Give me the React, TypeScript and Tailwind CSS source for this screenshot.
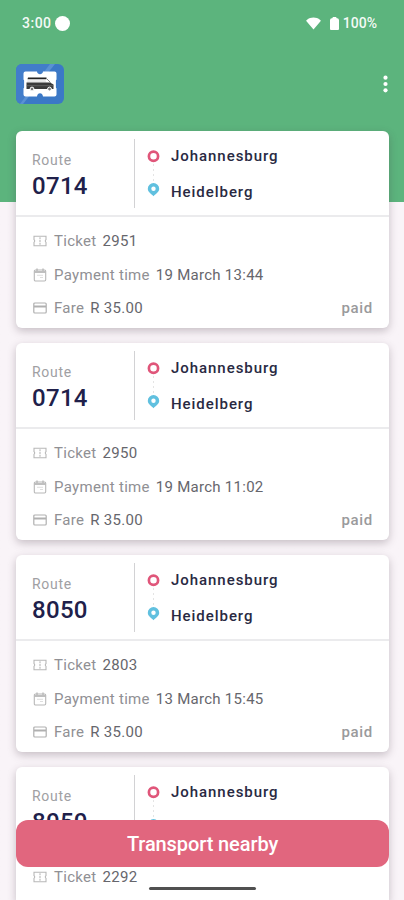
import type { ReactNode } from "react";

type Ticket = {
  route: string;
  from: string;
  to: string;
  number: string;
  time: string;
  fare: string;
};

const tickets: Ticket[] = [
  { route: "0714", from: "Johannesburg", to: "Heidelberg", number: "2951", time: "19 March 13:44", fare: "R 35.00" },
  { route: "0714", from: "Johannesburg", to: "Heidelberg", number: "2950", time: "19 March 11:02", fare: "R 35.00" },
  { route: "8050", from: "Johannesburg", to: "Heidelberg", number: "2803", time: "13 March 15:45", fare: "R 35.00" },
];

// the last card runs under the button and off the screen
const lastTicket = { route: "8050", from: "Johannesburg", number: "2292" };

const StatusBar = () => {
  return (
    <div className="flex h-[45px] items-center justify-between pt-px pl-[22px] pr-[27px] text-[14px] font-medium text-white/95">
      <div className="flex items-center gap-[3px]">
        <span className="tracking-[0.5px]">3:00</span>
        <span className="size-[15px] rounded-full bg-white" />
      </div>
      <div className="flex items-center">
        <svg width="15" height="13" viewBox="0 0 15 13" fill="white">
          <path d="M7.500 12.500.5 4.200Q-.1 3.500.8 2.900C4.800-.300 10.200-.300 14.200 2.900q.9.600.3 1.300Z" />
        </svg>
        <svg className="ml-[9px]" width="9" height="13" viewBox="0 0 9 13" fill="white">
          <path d="M3 0h3l.8 1.200A2 2 0 0 1 9 3.200V12a1 1 0 0 1-1 1H1a1 1 0 0 1-1-1V3.200a2 2 0 0 1 2.200-2z" />
        </svg>
        <span className="ml-[4px]">100%</span>
      </div>
    </div>
  );
};

const Logo = () => {
  return (
    <svg width="48" height="40" viewBox="0 0 48 40">
      <rect width="48" height="40" rx="6" fill="#3b78c6" />
      <path d="M6 0h33L7 40H6a6 6 0 0 1-6-6V6a6 6 0 0 1 6-6z" fill="#427dca" />
      <path d="M34 0h5L7 40H4z" fill="#6a9edb" opacity=".6" />
      <path
        d="M9.500 7.500H21c.3 3.500 5.700 3.500 6 0h11.500a2 2 0 0 1 2 2v6l-.6 1v7l.6 1v6a2 2 0 0 1-2 2H27c-.3-4.500-5.700-4.500-6 0H9.500a2 2 0 0 1-2-2v-6l.6-1v-7l-.6-1v-6a2 2 0 0 1 2-2z"
        fill="white"
      />
      <path d="M12 13.500h18.500v1.800H11.500z" fill="#222" />
      <path d="M11.500 16.200h18l1 2.300h-19.500z" fill="#e6e6e6" />
      <path d="M30.500 14.500 34.500 18.500" stroke="#888" />
      <path d="M10.500 18.500H34l3.500 2v4.500h-27z" fill="#3a3a3a" />
      <path d="M10.500 21.700h27" stroke="#777" strokeWidth=".6" />
      <circle cx="16" cy="25" r="1.900" fill="#777" stroke="white" />
      <circle cx="33.500" cy="25" r="1.900" fill="#777" stroke="white" />
    </svg>
  );
};

const TicketIcon = () => (
  <svg width="14" height="12" viewBox="0 0 14 12" fill="none" stroke="#b8b8b8" strokeWidth="1.100">
    <path d="M1 1.300h12v3.400q-1.400 1.300 0 2.600v3.400H1V7.300q1.400-1.300 0-2.600z" />
    <path d="M7 2.200v7.600" strokeDasharray="2 .8" />
  </svg>
);

const CalendarIcon = () => (
  <svg width="14" height="14" viewBox="0 0 14 14" fill="none" stroke="#b8b8b8" strokeWidth="1.100">
    <rect x="1.300" y="2" width="11.400" height="11" rx="1.200" />
    <path d="M1.500 4h11" strokeWidth="1.800" />
    <path d="M4 .5V3M10 .5V3" strokeWidth="1.400" />
    <path d="M4 7.300h6M7 9.500h3" strokeWidth=".8" stroke="#d6d6d6" />
  </svg>
);

const CardIcon = () => (
  <svg width="14" height="12" viewBox="0 0 14 12" fill="none" stroke="#b0b0b0" strokeWidth="1.200">
    <rect x=".8" y="1" width="12.400" height="10" rx="1" />
    <path d="M1 4.500h12" strokeWidth="2" />
  </svg>
);

const Row = ({ icon, label, value, children }: { icon: ReactNode; label: string; value: string; children?: ReactNode }) => {
  return (
    <div className="flex h-[33.400px] items-center text-[15px] leading-5">
      <span className="flex w-[15px] justify-end">{icon}</span>
      <span className="ml-[7px] tracking-[0.3px] text-[#909094]">{label}</span>
      <span className="ml-[6px] tracking-[0.27px] text-[#66666c]">{value}</span>
      {children}
    </div>
  );
};

const RouteNumber = ({ route }: { route: string }) => {
  return (
    <div className="mt-2 mb-[7px] w-[119px] border-r border-[#d2d2d4] pl-4">
      <div className="mt-[11px] text-[14px] leading-5 tracking-[0.7px] text-[#a0a0a3]">Route</div>
      <div className="mt-[1.500px] text-[24px] leading-[28px] font-medium tracking-[0.300px] text-[#20204a]">{route}</div>
    </div>
  );
};

const Stops = ({ from, to }: { from: string; to?: string }) => {
  return (
    <>
      <div className="flex w-9 flex-col items-center pt-[19px]">
        <svg width="14" height="48" viewBox="0 0 14 48" fill="none">
          <circle cx="7.500" cy="6.200" r="4.600" stroke="#e0567a" strokeWidth="2.700" />
          <path d="M7.500 14v18" stroke="#e4e4e4" strokeDasharray="2 3" />
          <path
            d="M7.500 33a5.700 5.700 0 0 0-5.700 5.700c0 3.200 3.500 5.100 5.700 7.500 2.200-2.400 5.700-4.300 5.700-7.500A5.700 5.700 0 0 0 7.500 33z"
            fill="#60c0df"
          />
          <circle cx="7.500" cy="38.700" r="2.200" fill="white" />
        </svg>
      </div>
      <div className="pt-[15px] text-[15px] leading-5 font-medium tracking-[0.950px] text-[#292942]">
        <div>{from}</div>
        {to && <div className="mt-[15.500px]">{to}</div>}
      </div>
    </>
  );
};

const TicketCard = ({ ticket }: { ticket: Ticket }) => {
  return (
    <div className="h-[196.500px] shrink-0 rounded-md bg-white shadow-[0_3px_9px_rgba(70,50,65,0.28)]">
      <div className="flex h-[86px] border-b-2 border-[#ebebed]">
        <RouteNumber route={ticket.route} />
        <Stops from={ticket.from} to={ticket.to} />
      </div>
      <div className="px-4 pt-[7.500px]">
        <Row icon={<TicketIcon />} label="Ticket" value={ticket.number} />
        <Row icon={<CalendarIcon />} label="Payment time" value={ticket.time} />
        <Row icon={<CardIcon />} label="Fare" value={ticket.fare}>
          <span className="ml-auto font-medium tracking-[0.700px] text-[#9a9a9c]">paid</span>
        </Row>
      </div>
    </div>
  );
};

const App = () => {
  return (
    <div className="relative h-[900px] w-[404px] overflow-hidden bg-[#f9f4f8] bg-linear-to-b from-[#5cb47d] from-[202px] to-[#f9f4f8] to-[202px] font-[Roboto,sans-serif]">
      <StatusBar />
      <header className="flex h-[86px] items-center justify-between pr-[16.500px] pl-4">
        <div className="-mt-2">
          <Logo />
        </div>
        <svg className="-mt-[8px]" width="5" height="18" viewBox="0 0 5 18" fill="white">
          <circle cx="2.500" cy="2.700" r="2.100" />
          <circle cx="2.500" cy="9" r="2.100" />
          <circle cx="2.500" cy="15.300" r="2.100" />
        </svg>
      </header>
      <main className="flex flex-col gap-[15.500px] pr-[15px] pl-4">
        {tickets.map((ticket) => (
          <TicketCard key={ticket.number} ticket={ticket} />
        ))}
        <div className="h-[134px] shrink-0 rounded-t-md bg-white shadow-[0_3px_9px_rgba(70,50,65,0.28)]">
          <div className="flex h-[86px]">
            <RouteNumber route={lastTicket.route} />
            <Stops from={lastTicket.from} />
          </div>
          <div className="px-4 pt-[7.500px]">
            <Row icon={<TicketIcon />} label="Ticket" value={lastTicket.number} />
          </div>
        </div>
      </main>
      <button className="absolute bottom-[33px] left-4 h-[47px] w-[373px] rounded-xl bg-[#e1667e] text-[20px] font-medium tracking-[-0.100px] text-white">
        Transport nearby
      </button>
      <div className="absolute bottom-[10px] left-[149px] h-[3px] w-[107px] rounded-full bg-[#505050]" />
    </div>
  );
};

export default App;
